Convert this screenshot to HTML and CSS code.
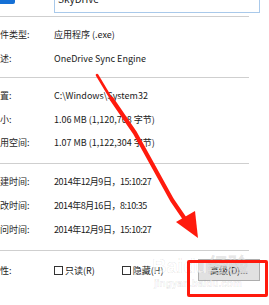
FILE: index.html
```html
<!DOCTYPE html>
<html lang="zh-CN">
<head>
<meta charset="utf-8">
<link rel="stylesheet" href="styles.css">
</head>
<body>
<div class="page">
  <div class="sheet">
    <div class="header">
      <div class="icon-col"><div class="icon"></div></div>
      <div class="namebox">SkyDrive</div>
    </div>
    <div class="sep"></div>
    <div class="section s1">
      <div class="row"><span class="label">文件类型:</span><span class="value">应用程序 (.exe)</span></div>
      <div class="row"><span class="label">描述:</span><span class="value">OneDrive Sync Engine</span></div>
    </div>
    <div class="sep"></div>
    <div class="section s2">
      <div class="row"><span class="label">位置:</span><span class="value">C:\Windows\System32</span></div>
      <div class="row"><span class="label">大小:</span><span class="value">1.06 MB (1,120,768 字节)</span></div>
      <div class="row"><span class="label">占用空间:</span><span class="value">1.07 MB (1,122,304 字节)</span></div>
    </div>
    <div class="sep"></div>
    <div class="section s3">
      <div class="row"><span class="label">创建时间:</span><span class="value date">2014年12月9日，15:10:27</span></div>
      <div class="row"><span class="label">修改时间:</span><span class="value date">2014年8月16日，8:10:35</span></div>
      <div class="row"><span class="label">访问时间:</span><span class="value date">2014年12月9日，15:10:27</span></div>
    </div>
    <div class="sep"></div>
    <div class="section s4">
      <div class="row attr"><span class="label">属性:</span>
        <span class="value checks">
          <span class="check"><span class="box"></span>只读(R)</span>
          <span class="check"><span class="box"></span>隐藏(H)</span>
        </span>
        <span class="btn">高级(D)...</span>
      </div>
    </div>
  </div>

  <div class="watermark">
    <div class="wm-logo">Bai<span class="paw">du</span>经验</div>
    <div class="wm-url">jingyan.baidu.com</div>
  </div>

  <div class="highlight"></div>

  <svg class="arrow" width="269" height="305" viewBox="0 0 269 305">
    <path d="M97 75 L112 100" stroke="#ff1a0d" stroke-width="2.6" fill="none" stroke-linecap="round"/>
    <path d="M111 98 L135 133 L172 200 L187 222" stroke="#ff1a0d" stroke-width="4.2" fill="none" stroke-linejoin="round"/>
    <polygon points="176,222 195,211 198,238" fill="#ff1a0d"/>
  </svg>
</div>
</body>
</html>
```
FILE: styles.css
```css
html, body {
  margin: 0;
  padding: 0;
  background: #fff;
}
.page {
  position: relative;
  width: 269px;
  height: 305px;
  overflow: hidden;
  font-family: "Noto Sans CJK SC", "Noto Sans", sans-serif;
  font-size: 9px;
  color: #1e1e1e;
}
.sheet {
  margin-left: -9px;
  width: 269px;
}
.header {
  display: flex;
  align-items: flex-start;
  height: 13px;
  margin-top: -9px;
}
.icon-col {
  width: 63px;
  flex: none;
}
.icon {
  margin-left: 9px;
  margin-top: 9px;
  width: 15px;
  height: 4px;
  background: #1570d6;
  border-bottom-right-radius: 2px;
}
.namebox {
  box-sizing: border-box;
  width: 206px;
  height: 22px;
  border: 1px solid #a9c9ea;
  padding-left: 3px;
  line-height: 14px;
  font-size: 10px;
  color: #222;
}
.sep {
  margin-top: 12px;
  height: 1px;
  background: #cfcfcf;
  margin-left: 9px;
  width: 249px;
}
.s1 + .sep, .s2 + .sep, .s3 + .sep { margin-top: 0; }
.section {
  display: flex;
  flex-direction: column;
}
.s1 { padding: 5px 0 7px; }
.s2 { padding: 6px 0 8.5px; }
.s3 { padding: 5px 0 9px; }
.s4 { padding: 8px 0 0; }
.row {
  display: flex;
  align-items: center;
  height: 24px;
}
.s2 .row { height: 23.5px; }
.label {
  width: 63px;
  flex: none;
  color: #262626;
}
.value {
  white-space: nowrap;
  color: #1a1a1a;
}
.date {
  letter-spacing: -0.45px;
}
.attr { height: 22px; }
.checks {
  display: flex;
  gap: 27px;
  width: 145px;
}
.check {
  display: flex;
  align-items: center;
  gap: 2px;
}
.box {
  display: inline-block;
  box-sizing: border-box;
  width: 9px;
  height: 9px;
  border: 1px solid #333;
  background: #fff;
}
.btn {
  box-sizing: border-box;
  width: 63px;
  height: 22px;
  border: 1px solid #adadad;
  background: #e1e1e1;
  display: flex;
  align-items: center;
  justify-content: center;
  color: #1a1a1a;
}
.highlight {
  position: absolute;
  left: 187px;
  top: 260px;
  width: 81px;
  height: 37px;
  box-sizing: border-box;
  border: 3px solid #ff1a0d;
  border-radius: 2px;
}
.arrow {
  position: absolute;
  left: 0;
  top: 0;
}
.watermark {
  position: absolute;
  left: 152px;
  top: 254px;
  color: rgba(255,255,255,0.6);
  -webkit-text-stroke: 0.6px rgba(0,0,0,0.1);
  font-family: "Liberation Sans", sans-serif;
}
.wm-logo {
  font-size: 20px;
  font-weight: bold;
  line-height: 24px;
  white-space: nowrap;
}
.wm-url {
  font-size: 10px;
  font-weight: bold;
  line-height: 12px;
  margin-left: 2px;
}
```
